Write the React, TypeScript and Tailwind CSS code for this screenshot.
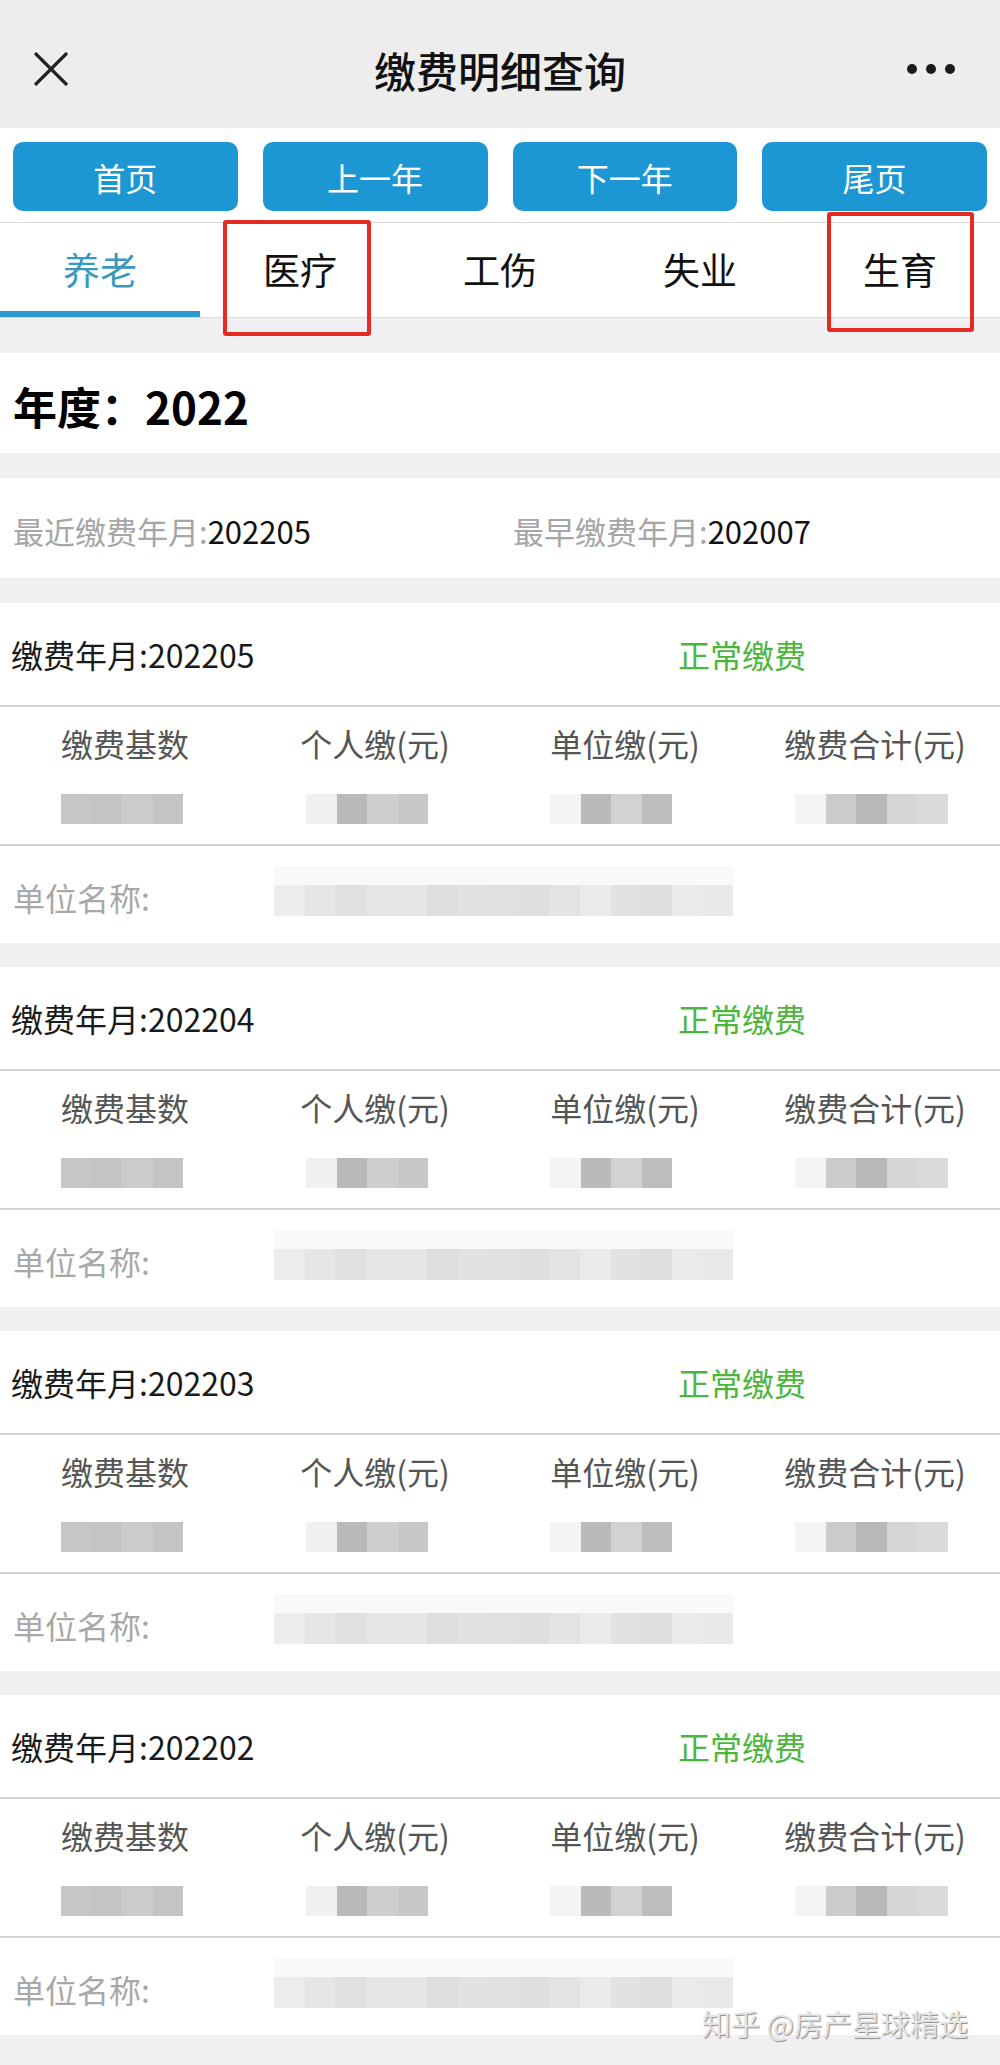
import React from "react";

const FONT = { fontFamily: '"Noto Sans CJK SC", "Noto Sans", sans-serif' };

const col1 = ["bg-[#c6c6c6]", "bg-[#c4c4c4]", "bg-[#cbcbcb]", "bg-[#c4c4c4]"];
const col2 = ["bg-[#f0f0f0]", "bg-[#b9b9b9]", "bg-[#cfcfcf]", "bg-[#c8c8c8]"];
const col3 = ["bg-[#f4f4f4]", "bg-[#bababa]", "bg-[#d2d2d2]", "bg-[#bdbdbd]"];
const col4 = ["bg-[#f4f4f4]", "bg-[#cbcbcb]", "bg-[#b8b8b8]", "bg-[#d6d6d6]", "bg-[#dadada]"];
const nameCells = [
  "bg-[#ececec]", "bg-[#e6e6e6]", "bg-[#e0e0e0]", "bg-[#e6e6e6]", "bg-[#e6e6e6]",
  "bg-[#dedede]", "bg-[#e2e2e2]", "bg-[#e0e0e0]", "bg-[#dedede]", "bg-[#e4e4e4]",
  "bg-[#eaeaea]", "bg-[#e2e2e2]", "bg-[#dedede]", "bg-[#eaeaea]", "bg-[#e8e8e8]",
];

function Mosaic({ cells }: { cells: string[] }) {
  return (
    <div className="flex h-[30px]">
      {cells.map((c, i) => (
        <div key={i} className={`w-[30.5px] h-full ${c}`} />
      ))}
    </div>
  );
}

function Card({ ym }: { ym: string }) {
  return (
    <div className="bg-white h-[340px] flex flex-col">
      <div className="h-[102px] flex items-center">
        <div className="w-[678px] pl-[11px] text-[32px] text-[#1a1a1a]">缴费年月:{ym}</div>
        <div className="text-[32px] text-[#4cb63c]">正常缴费</div>
      </div>
      <div className="h-[2px] bg-[#d2d2d2]" />
      <div className="h-[137px] flex flex-col pt-[16px]">
        <div className="grid grid-cols-4 h-[40px] leading-[40px] text-[32px] text-[#555555] text-center">
          <div>缴费基数</div>
          <div>个人缴(元)</div>
          <div>单位缴(元)</div>
          <div>缴费合计(元)</div>
        </div>
        <div className="mt-[31px] flex">
          <div className="ml-[61px]"><Mosaic cells={col1} /></div>
          <div className="ml-[123px]"><Mosaic cells={col2} /></div>
          <div className="ml-[122px]"><Mosaic cells={col3} /></div>
          <div className="ml-[123px]"><Mosaic cells={col4} /></div>
        </div>
      </div>
      <div className="h-[2px] bg-[#d2d2d2]" />
      <div className="h-[97px] flex items-start">
        <div className="w-[274px] pl-[13px] pt-[31px] leading-[40px] text-[32px] text-[#a8a8a8]">单位名称:</div>
        <div className="pt-[20px] flex flex-col">
          <div className="h-[19px] w-[459px] bg-[#f9f9f9]" />
          <div className="flex h-[31px]">
            {nameCells.map((c, i) => (
              <div key={i} className={`w-[30.6px] h-full ${c}`} />
            ))}
          </div>
        </div>
      </div>
    </div>
  );
}

export default function App() {
  const tabs = ["养老", "医疗", "工伤", "失业", "生育"];
  const btns = ["首页", "上一年", "下一年", "尾页"];
  return (
    <div className="relative w-[1000px] min-h-[2065px] bg-[#f0f0f2]" style={FONT}>
      {/* Header */}
      <div className="h-[128px] bg-[#ededed] flex items-center pt-[10px] relative">
        <div className="absolute left-[33px] top-[52px]">
          <svg width="36" height="34" viewBox="0 0 36 34">
            <line x1="2" y1="1" x2="34" y2="33" stroke="#222" strokeWidth="3.2" />
            <line x1="34" y1="1" x2="2" y2="33" stroke="#222" strokeWidth="3.2" />
          </svg>
        </div>
        <div className="flex-1 text-center text-[42px] font-medium text-[#111]">缴费明细查询</div>
        <div className="absolute left-[907px] top-[64px] flex gap-[9px]">
          <div className="w-[10px] h-[10px] rounded-full bg-[#1a1a1a]" />
          <div className="w-[10px] h-[10px] rounded-full bg-[#1a1a1a]" />
          <div className="w-[10px] h-[10px] rounded-full bg-[#1a1a1a]" />
        </div>
      </div>

      {/* Buttons */}
      <div className="h-[95px] bg-white grid grid-cols-4 gap-[25px] px-[13px] pt-[14px] pb-[11px] border-b border-[#dcdcdc]">
        {btns.map((b) => (
          <div key={b} className="h-[69px] rounded-[10px] bg-[#1d97d3] flex items-center justify-center text-white text-[32px]">
            {b}
          </div>
        ))}
      </div>

      {/* Tabs */}
      <div className="h-[95px] bg-white grid grid-cols-5 border-b border-[#dcdcdc]">
        {tabs.map((t, i) => (
          <div key={t} className="relative flex items-center justify-center text-[37px]">
            <span className={i === 0 ? "text-[#3a98bd]" : "text-[#111]"}>{t}</span>
            {i === 0 && <div className="absolute left-0 right-0 bottom-0 h-[6px] bg-[#2a9bd2]" />}
          </div>
        ))}
      </div>

      <div className="h-[35px]" />

      {/* Year */}
      <div className="h-[100px] bg-white flex items-center pt-[6px] pl-[13px]">
        <div className="text-[44px] font-bold text-black">年度：2022</div>
      </div>
      <div className="h-[25px]" />

      {/* Recent / earliest */}
      <div className="h-[100px] bg-white grid grid-cols-2 items-center pt-[6px] text-[31px]">
        <div className="pl-[13px]">
          <span className="text-[#a6a6a6]">最近缴费年月:</span>
          <span className="text-[#111]">202205</span>
        </div>
        <div className="pl-[13px]">
          <span className="text-[#a6a6a6]">最早缴费年月:</span>
          <span className="text-[#111]">202007</span>
        </div>
      </div>
      <div className="h-[25px]" />

      <div className="flex flex-col gap-[24px]">
        <Card ym="202205" />
        <Card ym="202204" />
        <Card ym="202203" />
        <Card ym="202202" />
      </div>

      {/* Red annotation boxes */}
      <div className="absolute left-[223px] top-[220px] w-[148px] h-[116px] border-[4px] border-[#e52a22] rounded-[3px]" />
      <div className="absolute left-[827px] top-[212px] w-[147px] h-[120px] border-[4px] border-[#e52a22] rounded-[3px]" />

      {/* Watermark */}
      <div className="absolute left-[702px] top-[2003px] text-[29px] leading-[40px] text-[#e4e4e4] whitespace-nowrap [text-shadow:1px_1px_1px_#8a8a8a]">
        知乎 @房产星球精选
      </div>
    </div>
  );
}
